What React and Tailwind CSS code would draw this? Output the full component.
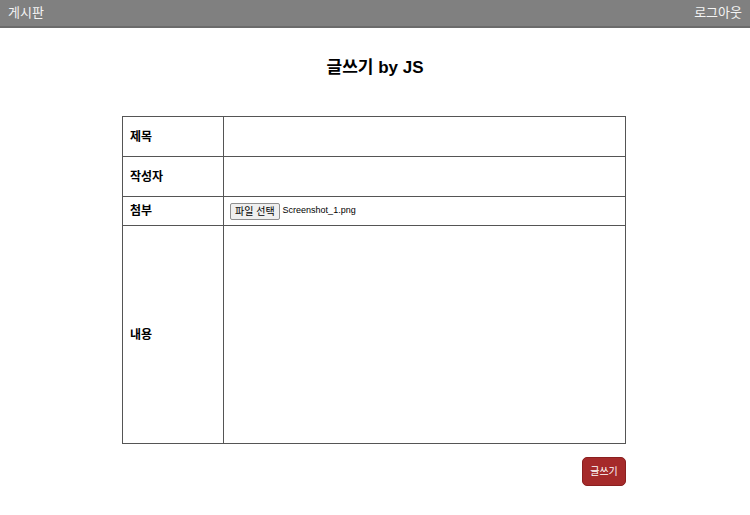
export default function App() {
  const font = { fontFamily: '"Liberation Sans", "Noto Sans CJK KR", sans-serif' };
  return (
    <div className="w-[750px] h-[515px] bg-white" style={font}>
      <div className="h-[28px] bg-[#808080] border-b-2 border-[#6b6b6b] flex items-center justify-between px-[8px] text-[13px] text-[#f4f4f4]">
        <span>게시판</span>
        <span>로그아웃</span>
      </div>
      <h1 className="text-center text-[17px] font-bold text-black mt-[30px] leading-[20px]">글쓰기 by JS</h1>
      <div className="w-[504px] ml-[122px] mt-[38px]">
        <table className="w-full border-collapse border border-[#555] text-[12px] text-black">
          <tbody>
            <tr className="h-[40px]">
              <th className="w-[101px] border border-[#555] text-left font-bold pl-[7px]">제목</th>
              <td className="border border-[#555]"></td>
            </tr>
            <tr className="h-[40px]">
              <th className="border border-[#555] text-left font-bold pl-[7px]">작성자</th>
              <td className="border border-[#555]"></td>
            </tr>
            <tr className="h-[29px]">
              <th className="border border-[#555] text-left font-bold pl-[7px]">첨부</th>
              <td className="border border-[#555] pl-[6px]">
                <div className="flex items-center gap-[3px]">
                  <span className="border border-[#8f8f8f] bg-[#efefef] rounded-[2px] px-[4px] h-[17px] leading-[15px] text-[10px]">파일 선택</span>
                  <span className="text-[9px]">Screenshot_1.png</span>
                </div>
              </td>
            </tr>
            <tr className="h-[218px]">
              <th className="border border-[#555] text-left font-bold pl-[7px]">내용</th>
              <td className="border border-[#555]"></td>
            </tr>
          </tbody>
        </table>
        <div className="flex justify-end mt-[13px]">
          <button className="w-[44px] h-[29px] rounded-[5px] bg-[#a52a2a] border border-[#8a1f1f] text-white text-[10px]">글쓰기</button>
        </div>
      </div>
    </div>
  );
}
